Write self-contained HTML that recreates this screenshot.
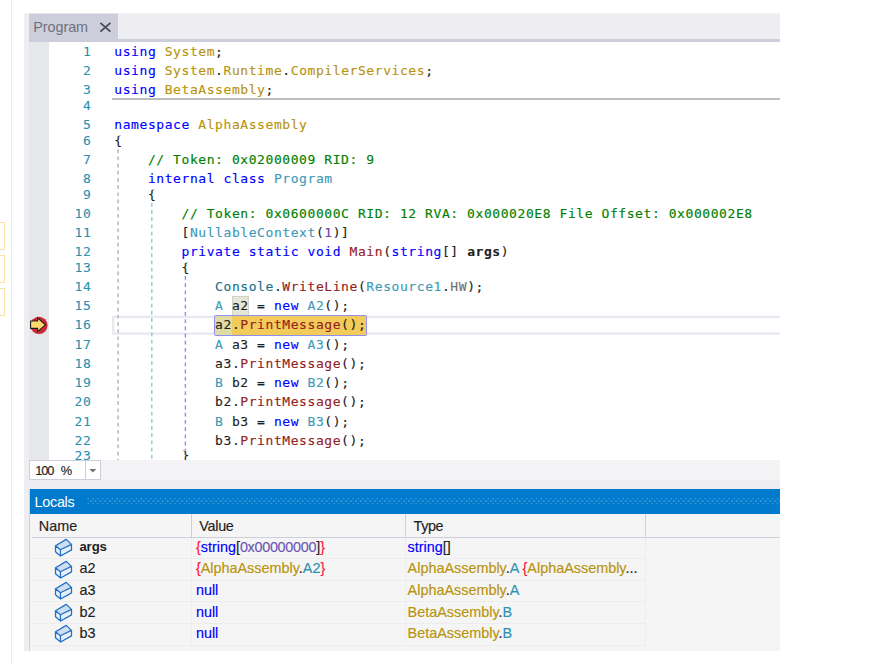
<!DOCTYPE html>
<html lang="en">
<head>
<meta charset="utf-8">
<title>Program</title>
<style>
html,body{margin:0;padding:0;background:#fff;}
body{width:871px;height:664px;overflow:hidden;position:relative;font-family:"Liberation Sans",sans-serif;}
.abs{position:absolute;}
#app{position:absolute;left:24px;top:13px;width:756px;height:637.6px;background:#eeeef2;overflow:hidden;}
#app *{position:absolute;}
#app span{position:static;}
.ui{font-family:"Liberation Sans",sans-serif;font-size:14.4px;white-space:pre;line-height:16px;color:#1e1e1e;-webkit-text-stroke:0.15px currentColor;}
.code{font-family:"DejaVu Sans Mono","Liberation Mono",monospace;font-size:13.0px;letter-spacing:0.573px;white-space:pre;line-height:19px;height:19px;color:#1e1e1e;left:85.3px;-webkit-text-stroke:0.14px currentColor;}
.ln{font-family:"DejaVu Sans Mono","Liberation Mono",monospace;font-size:13.0px;letter-spacing:0.573px;white-space:pre;line-height:19px;height:19px;color:#2b91af;text-align:right;width:40px;-webkit-text-stroke:0.1px currentColor;}
.k{color:#0000ff}.n{color:#b8930c}.t{color:#409ab7}.st{color:#1b6f8c}.c{color:#008000}.m{color:#932222}
.num{color:#6a3fb0}.b{font-weight:bold;color:#1e1e1e}.f{color:#707070}.l{color:#1e1e1e}
.row{left:6px;width:615px;height:21.6px;border-bottom:1px solid #ededed;box-sizing:border-box;}
.cell{top:0;height:21.6px;border-right:1px solid #eeeeee;box-sizing:border-box;}
.nv{color:#b8930c}.tv{color:#2b91af}.rv{color:#ff1040}.kv{color:#0000ff}.pv{color:#1e1e1e}.numv{color:#6c55b4;letter-spacing:-0.3px}
</style>
</head>
<body>
<div class="abs" style="left:11px;top:0;width:1px;height:664px;background:#ededed"></div>
<div class="abs" style="left:-4px;top:222.3px;width:7.2px;height:25.4px;border:1px solid #fbe3a6"></div>
<div class="abs" style="left:-4px;top:255.2px;width:7.2px;height:25.4px;border:1px solid #fbe3a6"></div>
<div class="abs" style="left:-4px;top:288.1px;width:7.2px;height:25.6px;border:1px solid #fbe3a6"></div>
<div id="app">

<div style="left:5px;top:26px;width:751px;height:3px;background:#cccedb"></div>
<div style="left:5px;top:0;width:88.5px;height:29px;background:#cccedb"></div>
<div class="ui" style="left:9.2px;top:5.51px;color:#70707c;font-size:14.4px;letter-spacing:-0.05px;-webkit-text-stroke:0">Program</div>
<svg style="left:75px;top:8px" width="14" height="14" viewBox="0 0 14 14"><path d="M1.4 1.9 L11.4 10.6 M11.4 1.9 L1.4 10.6" stroke="#47474f" stroke-width="1.7" fill="none"/></svg>
<div id="ed" style="left:5px;top:29px;width:751px;height:418px;background:#fff;overflow:hidden">
<div style="left:0;top:0;width:20px;height:418px;background:#e6e7e8"></div>
<div style="left:82.7px;top:56.2px;width:680px;height:1.7px;background:#bebebe"></div>
<svg style="left:0;top:0" width="751" height="418"><path d="M751 274.9 H84.2 V291.6 H751" fill="none" stroke="#e8e8f1" stroke-width="2.3"/></svg>
<svg style="left:0;top:0" width="751" height="418"><line x1="89.1" y1="107.2" x2="89.1" y2="418" stroke="#b2b2b2" stroke-width="1.4" stroke-dasharray="3.8 3.4"/><line x1="122.8" y1="160.9" x2="122.8" y2="418" stroke="#86cbde" stroke-width="1.4" stroke-dasharray="3.8 3.4"/><line x1="156.4" y1="234.0" x2="156.4" y2="408.4" stroke="#8a8aff" stroke-width="1.4" stroke-dasharray="3.8 3.4"/></svg>
<div style="left:202.5px;top:254.0px;width:17.0px;height:20px;background:#e3e6d8;border:1px solid #cfd2c4;box-sizing:border-box"></div>
<div style="left:185.1px;top:273.0px;width:153.2px;height:21px;background:#f3cb5b;border:1.2px solid #8f8ff0;box-sizing:border-box;border-radius:1.5px"></div>
<div style="left:186.1px;top:274.0px;width:16.8px;height:19px;background:#dfdba4"></div>
<svg style="left:0;top:273.0px" width="20" height="20" viewBox="29 315 20 20"><circle cx="39" cy="325.3" r="8.6" fill="#c92a3a"/><path d="M30.6 321 L37.6 321 L37.6 317.8 L45.4 324.8 L37.6 331.6 L37.6 328.4 L30.6 328.4 Z" fill="#fdd96e" stroke="#1e1e1e" stroke-width="1.1" stroke-linejoin="miter"/></svg>
<div class="ln" style="left:22.3px;top:0.00px">1</div>
<div class="code" style="top:0.00px"><span class="k">using</span> <span class="n">System</span>;</div>
<div class="ln" style="left:22.3px;top:19.00px">2</div>
<div class="code" style="top:19.00px"><span class="k">using</span> <span class="n">System</span>.<span class="n">Runtime</span>.<span class="n">CompilerServices</span>;</div>
<div class="ln" style="left:22.3px;top:38.00px">3</div>
<div class="code" style="top:38.00px"><span class="k">using</span> <span class="n">BetaAssembly</span>;</div>
<div class="ln" style="left:22.3px;top:54.00px">4</div>
<div class="ln" style="left:22.3px;top:73.00px">5</div>
<div class="code" style="top:73.00px"><span class="k">namespace</span> <span class="n">AlphaAssembly</span></div>
<div class="ln" style="left:22.3px;top:89.00px">6</div>
<div class="code" style="top:89.00px;clip-path:inset(4.8px 0 0 0)">{</div>
<div class="ln" style="left:22.3px;top:108.00px">7</div>
<div class="code" style="top:108.00px">    <span class="c">// Token: 0x02000009 RID: 9</span></div>
<div class="ln" style="left:22.3px;top:127.00px">8</div>
<div class="code" style="top:127.00px">    <span class="k">internal</span> <span class="k">class</span> <span class="t">Program</span></div>
<div class="ln" style="left:22.3px;top:143.00px">9</div>
<div class="code" style="top:143.00px;clip-path:inset(4.8px 0 0 0)">    {</div>
<div class="ln" style="left:22.3px;top:162.00px">10</div>
<div class="code" style="top:162.00px">        <span class="c">// Token: 0x0600000C RID: 12 RVA: 0x000020E8 File Offset: 0x000002E8</span></div>
<div class="ln" style="left:22.3px;top:181.00px">11</div>
<div class="code" style="top:181.00px">        [<span class="t">NullableContext</span>(<span class="num">1</span>)]</div>
<div class="ln" style="left:22.3px;top:200.00px">12</div>
<div class="code" style="top:200.00px">        <span class="k">private</span> <span class="k">static</span> <span class="k">void</span> <span class="m">Main</span>(<span class="k">string</span>[] <span class="b">args</span>)</div>
<div class="ln" style="left:22.3px;top:216.00px">13</div>
<div class="code" style="top:216.00px;clip-path:inset(4.8px 0 0 0)">        {</div>
<div class="ln" style="left:22.3px;top:235.00px">14</div>
<div class="code" style="top:235.00px">            <span class="st">Console</span>.<span class="m">WriteLine</span>(<span class="t">Resource1</span>.<span class="f">HW</span>);</div>
<div class="ln" style="left:22.3px;top:254.00px">15</div>
<div class="code" style="top:254.00px">            <span class="t">A</span> <span class="l">a2</span> = <span class="k">new</span> <span class="t">A2</span>();</div>
<div class="ln" style="left:22.3px;top:273.00px">16</div>
<div class="code" style="top:273.00px">            <span class="l">a2</span>.<span class="m">PrintMessage</span>();</div>
<div class="ln" style="left:22.3px;top:293.00px">17</div>
<div class="code" style="top:293.00px">            <span class="t">A</span> <span class="l">a3</span> = <span class="k">new</span> <span class="t">A3</span>();</div>
<div class="ln" style="left:22.3px;top:312.00px">18</div>
<div class="code" style="top:312.00px">            <span class="l">a3</span>.<span class="m">PrintMessage</span>();</div>
<div class="ln" style="left:22.3px;top:331.00px">19</div>
<div class="code" style="top:331.00px">            <span class="t">B</span> <span class="l">b2</span> = <span class="k">new</span> <span class="t">B2</span>();</div>
<div class="ln" style="left:22.3px;top:350.00px">20</div>
<div class="code" style="top:350.00px">            <span class="l">b2</span>.<span class="m">PrintMessage</span>();</div>
<div class="ln" style="left:22.3px;top:370.00px">21</div>
<div class="code" style="top:370.00px">            <span class="t">B</span> <span class="l">b3</span> = <span class="k">new</span> <span class="t">B3</span>();</div>
<div class="ln" style="left:22.3px;top:389.00px">22</div>
<div class="code" style="top:389.00px">            <span class="l">b3</span>.<span class="m">PrintMessage</span>();</div>
<div class="ln" style="left:22.3px;top:404.00px">23</div>
<div class="code" style="top:404.00px;clip-path:inset(4.8px 0 0 0)">        }</div>
</div>
<div style="left:5px;top:447px;width:751px;height:20px;background:#f3f3f5"></div>
<div style="left:5px;top:447px;width:72px;height:20px;background:#fff;border:1px solid #cccedb;box-sizing:border-box"></div>
<div style="left:61px;top:448px;width:1px;height:18px;background:#cccedb"></div>
<div class="ui" style="left:11.3px;top:449.76px;font-size:12.8px;letter-spacing:-1.2px;word-spacing:5.4px">100 %</div>
<svg style="left:64px;top:455px" width="10" height="6" viewBox="0 0 10 6"><path d="M1.4 1 L8.2 1 L4.8 4.6 Z" fill="#717171"/></svg>
<div style="left:5px;top:476px;width:751px;height:161.6px;background:#f5f5f5;border-left:1px solid #cccedb;box-sizing:border-box"></div>
<div style="left:6px;top:476px;width:750px;height:25px;background:#007acc"></div>
<div class="ui" style="left:10.6px;top:480.61px;color:#fff;font-size:14.4px;letter-spacing:-0.3px;-webkit-text-stroke:0">Locals</div>
<svg style="left:62.7px;top:485.2px" width="694" height="8" viewBox="0 0 694 8"><defs><pattern id="gp" width="4.82" height="4.9" patternUnits="userSpaceOnUse"><rect x="0.6" y="0" width="1.3" height="1.3" fill="#4a9edc"/><rect x="3.0" y="2.45" width="1.3" height="1.3" fill="#6ab2e6"/></pattern></defs><rect x="0" y="0" width="694" height="6.3" fill="url(#gp)"/></svg>
<div style="left:8px;top:523.6px;width:748px;height:1.2px;background:#cccedb"></div>
<div style="left:167.3px;top:501px;width:1.2px;height:23px;background:#cccedb"></div>
<div style="left:381.0px;top:501px;width:1.2px;height:23px;background:#cccedb"></div>
<div style="left:621.0px;top:501px;width:1.2px;height:23px;background:#cccedb"></div>
<div class="ui" style="left:14.8px;top:504.51px">Name</div>
<div class="ui" style="left:175.3px;top:504.51px;letter-spacing:-0.3px">Value</div>
<div class="ui" style="left:389.6px;top:504.51px;letter-spacing:-0.4px">Type</div>
<div class="row" style="top:524.6px">
<div class="cell" style="left:0;width:161.8px"></div>
<div class="cell" style="left:161.8px;width:213.8px"></div>
<div class="cell" style="left:375.6px;width:240.0px"></div>
<svg style="left:24px;top:0.4px" width="19" height="19" viewBox="54 538 19 19"><path d="M66.25 539.4 L71.5 544.4 L60.4 549.7 L55.5 545.8 Z" fill="#cddff0"/><path d="M55.5 545.8 L60.4 549.7 L71.5 544.4 L71.5 549.9 L60.6 556 L55.5 551.7 Z" fill="#eaf0f8"/><path d="M66.25 539.4 L71.5 544.4 L71.5 549.9 L60.6 556 L55.5 551.7 L55.5 545.8 Z M55.5 545.8 L60.4 549.7 L71.5 544.4 M60.4 549.7 L60.6 556" fill="none" stroke="#1f6fc6" stroke-width="1.25" stroke-linejoin="round"/></svg>
<div class="ui" style="left:49.4px;top:1.51px;font-weight:bold;font-size:13.2px;letter-spacing:-0.1px;-webkit-text-stroke:0;">args</div>
<div class="ui" style="left:165.9px;top:1.51px"><span class="rv">{</span><span class="kv">string</span><span class="pv">[</span><span class="numv">0x00000000</span><span class="pv">]</span><span class="rv">}</span></div>
<div class="ui" style="left:377.6px;top:1.51px"><span class="kv">string</span><span class="pv">[]</span></div>
</div>
<div class="row" style="top:546.2px">
<div class="cell" style="left:0;width:161.8px"></div>
<div class="cell" style="left:161.8px;width:213.8px"></div>
<div class="cell" style="left:375.6px;width:240.0px"></div>
<svg style="left:24px;top:0.4px" width="19" height="19" viewBox="54 538 19 19"><path d="M66.25 539.4 L71.5 544.4 L60.4 549.7 L55.5 545.8 Z" fill="#cddff0"/><path d="M55.5 545.8 L60.4 549.7 L71.5 544.4 L71.5 549.9 L60.6 556 L55.5 551.7 Z" fill="#eaf0f8"/><path d="M66.25 539.4 L71.5 544.4 L71.5 549.9 L60.6 556 L55.5 551.7 L55.5 545.8 Z M55.5 545.8 L60.4 549.7 L71.5 544.4 M60.4 549.7 L60.6 556" fill="none" stroke="#1f6fc6" stroke-width="1.25" stroke-linejoin="round"/></svg>
<div class="ui" style="left:49.4px;top:0.91px;">a2</div>
<div class="ui" style="left:165.9px;top:0.91px"><span class="rv">{</span><span class="nv">AlphaAssembly</span><span class="pv">.</span><span class="tv">A2</span><span class="rv">}</span></div>
<div class="ui" style="left:377.6px;top:0.91px"><span class="nv">AlphaAssembly</span><span class="pv">.</span><span class="tv">A</span><span class="pv"> </span><span class="rv">{</span><span class="nv">AlphaAssembly</span><span class="pv">...</span></div>
</div>
<div class="row" style="top:567.8px">
<div class="cell" style="left:0;width:161.8px"></div>
<div class="cell" style="left:161.8px;width:213.8px"></div>
<div class="cell" style="left:375.6px;width:240.0px"></div>
<svg style="left:24px;top:0.4px" width="19" height="19" viewBox="54 538 19 19"><path d="M66.25 539.4 L71.5 544.4 L60.4 549.7 L55.5 545.8 Z" fill="#cddff0"/><path d="M55.5 545.8 L60.4 549.7 L71.5 544.4 L71.5 549.9 L60.6 556 L55.5 551.7 Z" fill="#eaf0f8"/><path d="M66.25 539.4 L71.5 544.4 L71.5 549.9 L60.6 556 L55.5 551.7 L55.5 545.8 Z M55.5 545.8 L60.4 549.7 L71.5 544.4 M60.4 549.7 L60.6 556" fill="none" stroke="#1f6fc6" stroke-width="1.25" stroke-linejoin="round"/></svg>
<div class="ui" style="left:49.4px;top:1.31px;">a3</div>
<div class="ui" style="left:165.9px;top:1.31px"><span class="kv">null</span></div>
<div class="ui" style="left:377.6px;top:1.31px"><span class="nv">AlphaAssembly</span><span class="pv">.</span><span class="tv">A</span></div>
</div>
<div class="row" style="top:589.4px">
<div class="cell" style="left:0;width:161.8px"></div>
<div class="cell" style="left:161.8px;width:213.8px"></div>
<div class="cell" style="left:375.6px;width:240.0px"></div>
<svg style="left:24px;top:0.4px" width="19" height="19" viewBox="54 538 19 19"><path d="M66.25 539.4 L71.5 544.4 L60.4 549.7 L55.5 545.8 Z" fill="#cddff0"/><path d="M55.5 545.8 L60.4 549.7 L71.5 544.4 L71.5 549.9 L60.6 556 L55.5 551.7 Z" fill="#eaf0f8"/><path d="M66.25 539.4 L71.5 544.4 L71.5 549.9 L60.6 556 L55.5 551.7 L55.5 545.8 Z M55.5 545.8 L60.4 549.7 L71.5 544.4 M60.4 549.7 L60.6 556" fill="none" stroke="#1f6fc6" stroke-width="1.25" stroke-linejoin="round"/></svg>
<div class="ui" style="left:49.4px;top:1.71px;">b2</div>
<div class="ui" style="left:165.9px;top:1.71px"><span class="kv">null</span></div>
<div class="ui" style="left:377.6px;top:1.71px"><span class="nv">BetaAssembly</span><span class="pv">.</span><span class="tv">B</span></div>
</div>
<div class="row" style="top:611.0px">
<div class="cell" style="left:0;width:161.8px"></div>
<div class="cell" style="left:161.8px;width:213.8px"></div>
<div class="cell" style="left:375.6px;width:240.0px"></div>
<svg style="left:24px;top:0.4px" width="19" height="19" viewBox="54 538 19 19"><path d="M66.25 539.4 L71.5 544.4 L60.4 549.7 L55.5 545.8 Z" fill="#cddff0"/><path d="M55.5 545.8 L60.4 549.7 L71.5 544.4 L71.5 549.9 L60.6 556 L55.5 551.7 Z" fill="#eaf0f8"/><path d="M66.25 539.4 L71.5 544.4 L71.5 549.9 L60.6 556 L55.5 551.7 L55.5 545.8 Z M55.5 545.8 L60.4 549.7 L71.5 544.4 M60.4 549.7 L60.6 556" fill="none" stroke="#1f6fc6" stroke-width="1.25" stroke-linejoin="round"/></svg>
<div class="ui" style="left:49.4px;top:1.11px;">b3</div>
<div class="ui" style="left:165.9px;top:1.11px"><span class="kv">null</span></div>
<div class="ui" style="left:377.6px;top:1.11px"><span class="nv">BetaAssembly</span><span class="pv">.</span><span class="tv">B</span></div>
</div>
<svg style="left:0;top:0" width="756" height="1"><rect width="756" height="1" fill="#fff" fill-opacity="0.45"/></svg>
</div>
</body>
</html>
